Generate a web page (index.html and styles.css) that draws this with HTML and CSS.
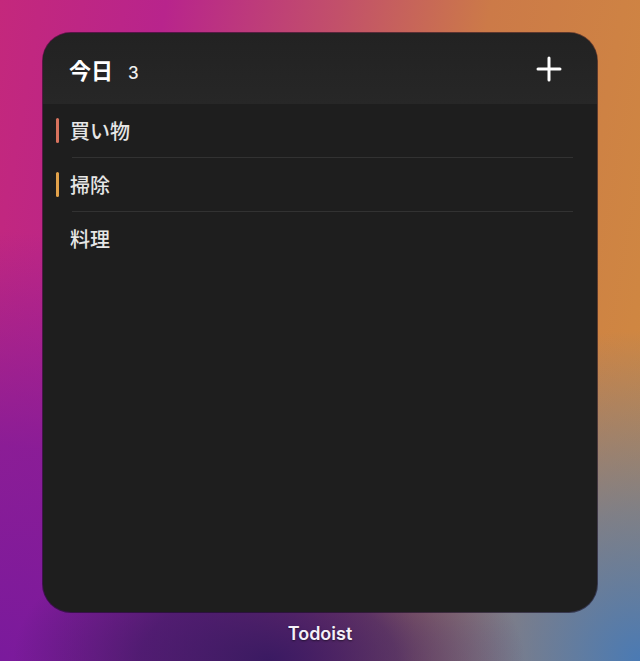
FILE: index.html
```html
<!DOCTYPE html>
<html lang="ja">
<head>
<meta charset="utf-8">
<link rel="stylesheet" href="styles.css">
</head>
<body>
<div class="desktop">
  <div class="widget">
    <div class="header">
      <div class="title"><span class="title-text">今日</span><span class="count">3</span></div>
      <svg class="plus" width="28" height="28" viewBox="0 0 28 28"><path d="M14 3v22M3 14h22" stroke="#fff" stroke-width="3" stroke-linecap="round"/></svg>
    </div>
    <ul class="list">
      <li class="item"><span class="bar bar-red"></span><span class="label">買い物</span></li>
      <li class="item"><span class="bar bar-orange"></span><span class="label">掃除</span></li>
      <li class="item"><span class="bar"></span><span class="label">料理</span></li>
    </ul>
  </div>
  <div class="app-name">Todoist</div>
</div>
</body>
</html>
```
FILE: styles.css
```css
html, body {
  margin: 0;
  padding: 0;
}
body {
  width: 640px;
  height: 661px;
  overflow: hidden;
  font-family: "Noto Sans CJK JP", "Noto Sans", "Liberation Sans", sans-serif;
  background:
    radial-gradient(ellipse 40% 22% at 42% 100%, #3a1a62 0%, rgba(58,26,98,0.7) 50%, rgba(58,26,98,0) 100%),
    radial-gradient(ellipse 50% 50% at 100% 100%, #4a7ab4 0%, rgba(74,122,180,0.6) 45%, rgba(74,122,180,0) 100%),
    radial-gradient(ellipse 65% 65% at 0% 100%, #7a1a9c 0%, rgba(122,26,156,0.75) 50%, rgba(122,26,156,0) 100%),
    linear-gradient(100deg, #c4287c 0%, #b8248c 22%, #c2506a 45%, #cc7a48 65%, #d08a40 100%);
}
.desktop {
  width: 640px;
  height: 661px;
  box-sizing: border-box;
  padding-top: 33px;
  display: flex;
  flex-direction: column;
  align-items: center;
}
.widget {
  width: 554px;
  height: 579px;
  border-radius: 28px;
  background: #1e1e1e;
  overflow: hidden;
  box-shadow: 0 0 0 1px rgba(20,10,30,0.6);
}
.header {
  height: 71px;
  background: linear-gradient(to bottom, #222222 0%, #272727 100%);
  display: flex;
  align-items: center;
  justify-content: space-between;
  padding: 0 34px 0 26px;
  box-sizing: border-box;
}
.title {
  display: flex;
  align-items: baseline;
  color: #fff;
}
.title-text {
  font-size: 22px;
  font-weight: 700;
}
.count {
  font-family: "Inter", "Liberation Sans", sans-serif;
  font-size: 17px;
  font-weight: 500;
  margin-left: 15px;
  color: #f0f0f0;
}
.plus {
  display: block;
}
.list {
  list-style: none;
  margin: 0;
  padding: 0;
}
.item {
  position: relative;
  height: 53px;
  display: flex;
  align-items: center;
  padding-left: 13px;
}
.item + .item::before {
  content: "";
  position: absolute;
  top: -1px;
  left: 29px;
  right: 24px;
  height: 1px;
  background: #323232;
}
.item + .item {
  margin-top: 1px;
}
.bar {
  width: 3px;
  height: 25px;
  border-radius: 2px;
  margin-right: 11px;
}
.bar-red {
  background: #d8735e;
}
.bar-orange {
  background: #e2a24a;
}
.label {
  font-size: 20px;
  font-weight: 500;
  color: #e6e6e6;
}
.app-name {
  margin-top: 11px;
  font-family: "Inter", "Liberation Sans", sans-serif;
  font-size: 18px;
  font-weight: 600;
  color: #f4f0f8;
  text-shadow: 0 1px 2px rgba(0,0,0,0.5);
}
```
